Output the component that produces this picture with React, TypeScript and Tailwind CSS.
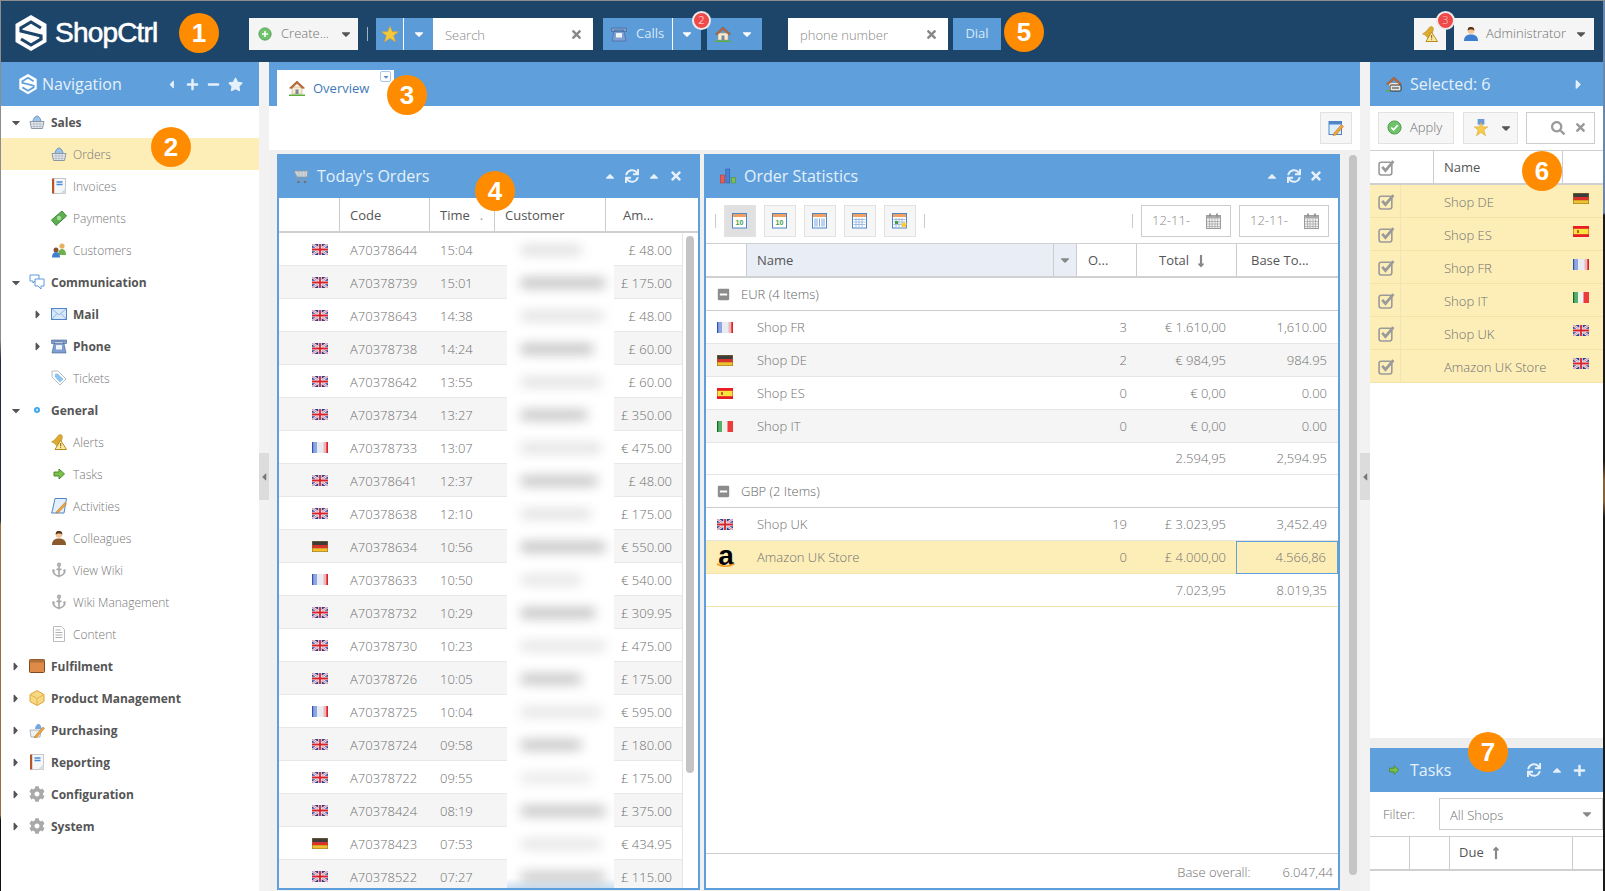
import React from 'react'
import {
  FaCaretDown, FaCaretLeft, FaCaretRight, FaCaretUp, FaCog, FaLongArrowAltDown, FaLongArrowAltUp,
  FaMinus, FaMinusSquare, FaPlus, FaSearch, FaStar, FaSync, FaTimes,
} from 'react-icons/fa'
import { Anchor } from 'lucide-react'

type Svg = { className?: string }

const Logo = ({ stroke, className }: { stroke: string; className: string }) => (
  <svg viewBox="0 0 32 36" className={className}>
    <path d="M16 0 31.5 9v18L16 36 .5 27V9z" fill="#fff" />
    <path d="M26 13 16 7 6 13v3l20 5v3l-10 6-10-6" fill="none" stroke={stroke} strokeWidth="3.2" />
  </svg>
)

const UkFlag = () => (
  <svg viewBox="0 0 16 11" className="h-[11px] w-4 shrink-0">
    <rect width="16" height="11" fill="#2b3f95" />
    <path d="M0 0 16 11M16 0 0 11" stroke="#e6e8f2" strokeWidth="2.6" />
    <path d="M0 0 16 11M16 0 0 11" stroke="#e0555a" strokeWidth=".7" />
    <path d="M8 0v11M0 5.500h16" stroke="#f2f2f6" strokeWidth="3.400" />
    <path d="M8 0v11M0 5.500h16" stroke="#d8232a" strokeWidth="1.800" />
  </svg>
)
const Flag = ({ c }: { c: string }) => (
  <svg viewBox="0 0 16 11" className="h-[11px] w-4 shrink-0">
    {c === 'fr' && (
      <>
        <rect width="16" height="11" fill="#e8ebf2" />
        <rect x="1" width="4" height="11" fill="#8ea6e4" />
        <rect x="11.500" width="3" height="11" fill="#eeb8b8" />
        <rect width="1.200" height="11" fill="#2f52b4" />
        <rect x="14.300" width="1.700" height="11" fill="#e01f26" />
      </>
    )}
    {c === 'it' && (
      <>
        <rect width="16" height="11" fill="#f0f2ee" />
        <rect width="5" height="11" fill="#58b068" />
        <rect width="1.200" height="11" fill="#14662a" />
        <rect x="10.500" width="5.500" height="11" fill="#ee3a3a" />
      </>
    )}
    {c === 'de' && (
      <>
        <rect width="16" height="11" fill="#8a7020" />
        <rect x=".5" y=".5" width="15" height="3.500" fill="#3c3c3c" />
        <rect x=".5" y="4" width="15" height="3.300" fill="#d8322a" />
        <rect x=".5" y="7.300" width="15" height="3.200" fill="#f0c030" />
      </>
    )}
    {c === 'es' && (
      <>
        <rect width="16" height="11" fill="#e81c24" />
        <rect x=".5" y="2.800" width="15" height="5.400" fill="#f7e43c" />
        <rect x="4" y="4" width="2" height="3" fill="#c85a30" />
      </>
    )}
    {c === 'uk' && <UkFlag />}
  </svg>
)

const Check = ({ className }: Svg) => (
  <svg viewBox="0 0 16 16" className={className}>
    <rect x="1" y="3" width="12" height="12" rx="2" fill="none" stroke="#9a9a9a" strokeWidth="1.500" />
    <path d="m4 7.500 3 3.500 7.500-9" fill="none" stroke="#9a9a9a" strokeWidth="2.600" />
  </svg>
)

const Basket = ({ className }: Svg) => (
  <svg viewBox="0 0 16 16" className={className}>
    <path d="M4 8C4 4 7 2 8 2s4 2 4 6" fill="#9cc3ea" stroke="#5f8fc0" />
    <path d="M1 7.500h14l-1.500 7h-11z" fill="#e9edf2" stroke="#8d98a4" />
    <path d="M1.500 10h13M2 12.500h12M5 8v6M8 8v6M11 8v6" stroke="#a9b2bc" strokeWidth=".7" />
  </svg>
)
const Notebook = ({ className }: Svg) => (
  <svg viewBox="0 0 16 16" className={className}>
    <rect x="2.500" y="0.500" width="12" height="15" fill="#f4f6f8" stroke="#c4c8cc" />
    <rect x="1" y="0.500" width="2.200" height="15" fill="#b8542a" />
    <path d="M5.500 4h6M5.500 6.500h6" stroke="#4a8ad8" strokeWidth="1.400" />
    <path d="M14.500 10v5.500H9z" fill="#d9dde2" />
  </svg>
)
const Money = ({ className }: Svg) => (
  <svg viewBox="0 0 16 16" className={className}>
    <path d="M0.500 10 11 1l4.500 5L5 15.500z" fill="#5dae52" stroke="#3e8a38" />
    <circle cx="8" cy="8" r="2.200" fill="#a6dc94" />
  </svg>
)
const People = ({ className }: Svg) => (
  <svg viewBox="0 0 16 16" className={className}>
    <circle cx="11" cy="4" r="2.600" fill="#e8b060" />
    <path d="M7 13c0-4 2-6 4-6s4 2 4 6z" fill="#6eb04e" />
    <circle cx="5" cy="8" r="2.500" fill="#8a5030" />
    <path d="M1 15.500c0-4 2-5.500 4-5.500s4 1.500 4 5.500z" fill="#3f7fd0" />
  </svg>
)
const Chat = ({ className }: Svg) => (
  <svg viewBox="0 0 16 16" className={className}>
    <path d="M1 1h9v6H6l-2 2V7H1z" fill="#fff" stroke="#5f9ad8" />
    <path d="M6 5h9v7h-3v3l-3-3H6z" fill="#fff" stroke="#5f9ad8" />
  </svg>
)
const Mail = ({ className }: Svg) => (
  <svg viewBox="0 0 16 16" className={className}>
    <rect x=".5" y="2.500" width="15" height="11" fill="#d8e8f8" stroke="#4f86c8" />
    <path d="m1 3 7 6 7-6M1 13l5-5.500M15 13l-5-5.500" fill="none" stroke="#8fb6e2" />
  </svg>
)
const Phone = ({ className }: Svg) => (
  <svg viewBox="0 0 16 16" className={className}>
    <path d="M.5 2h15v3.500h-3V4h-9v1.500h-3z" fill="#7f9fcc" stroke="#3f5f94" strokeWidth=".6" />
    <path d="M3 5.500h10L15 15H1z" fill="#7f9fd0" stroke="#3f5f94" strokeWidth=".6" />
    <rect x="5" y="7" width="6" height="4.500" fill="#eef3fa" />
  </svg>
)
const Tag = ({ className }: Svg) => (
  <svg viewBox="0 0 16 16" className={className}>
    <path d="M1 1h6l8 8-6 6-8-8z" fill="#fff" stroke="#b8bcc2" />
    <path d="M4.500 3.500h2l6 5.500-3.500 3.500-5.500-6z" fill="#8ec2f0" />
  </svg>
)
const Dot = ({ className }: Svg) => (
  <svg viewBox="0 0 16 16" className={className}>
    <circle cx="8" cy="8" r="3" fill="#3fa4ee" />
    <circle cx="8" cy="8" r="1.200" fill="#bfe2fb" />
  </svg>
)
const Bell = ({ className }: Svg) => (
  <svg viewBox="0 0 16 16" className={className}>
    <path d="M0.500 8C3 6 5 5 6 3c1-2 4-3.500 5-1.500 1 2 0 3-.5 5L6 12 3 9z" fill="#dcaa30" stroke="#b88a20" strokeWidth=".5" />
    <path d="M9.500 6 15.500 15.500H4z" fill="#fbe9a0" stroke="#b88a20" />
    <path d="M9.700 9v3.300M9.700 13.200v1" stroke="#7a5a10" />
  </svg>
)
const Arrow = ({ className }: Svg) => (
  <svg viewBox="0 0 16 16" className={className}>
    <path d="M3 6h5V3l5.500 5L8 13v-3H3z" fill="#7cc04a" stroke="#4b8a28" />
  </svg>
)
const ScrollPen = ({ className }: Svg) => (
  <svg viewBox="0 0 16 16" className={className}>
    <path d="M4 .5h11.500L13 15H.500l1-3z" fill="#e3effb" stroke="#4f86c8" />
    <path d="M6 13 14 4.500l1.500 1.500-8 8.500-2.500.500z" fill="#f0a63a" stroke="#b06a18" strokeWidth=".5" />
  </svg>
)
const Person = ({ className, body = '#8a5a2a' }: Svg & { body?: string }) => (
  <svg viewBox="0 0 16 16" className={className}>
    <circle cx="8" cy="4.500" r="3.300" fill="#f1c595" />
    <path d="M4.700 4.500C4.700 1.500 6 1 8 1s3.300.5 3.300 3.500C10 3 6 3 4.700 4.500" fill="#5a3418" />
    <path d="M1 15c0-4 2-6.500 7-6.500s7 2.500 7 6.500z" fill={body} />
  </svg>
)
const Doc = ({ className }: Svg) => (
  <svg viewBox="0 0 16 16" className={className}>
    <path d="M2.500.5h8l3 3v12h-11z" fill="#fff" stroke="#bcbcbc" />
    <path d="M4.500 4h5M4.500 6.500h7M4.500 9h7M4.500 11.500h7" stroke="#b0b0b0" />
  </svg>
)
const Box = ({ className }: Svg) => (
  <svg viewBox="0 0 16 16" className={className}>
    <rect x=".5" y="1.500" width="15" height="13" rx="1" fill="#e08a48" stroke="#7a4a20" />
    <rect x=".5" y="1.500" width="15" height="3" fill="#b07038" />
  </svg>
)
const Cube = ({ className }: Svg) => (
  <svg viewBox="0 0 16 16" className={className}>
    <path d="M8 .5 15 4.500v7L8 15.500 1 11.500v-7z" fill="#f8d882" stroke="#d8a438" />
    <path d="M1 4.500 8 8.500l7-4M8 8.500v7" fill="none" stroke="#e2b44c" />
  </svg>
)
const BasketPen = ({ className }: Svg) => (
  <svg viewBox="0 0 16 16" className={className}>
    <path d="M6 7c0-3 2-5 3.500-5s3 2 3 5" fill="#74a8e0" />
    <path d="M1 8h11l-1 7H2z" fill="#eef1f4" stroke="#8d98a4" strokeWidth=".7" />
    <path d="M6 14 14 5l1.500 1.500-8 9-2.500.500z" fill="#f0a63a" stroke="#b06a18" strokeWidth=".5" />
  </svg>
)
const Gear = ({ className }: Svg) => <FaCog className={`text-[#a9a9a9] ${className}`} />
const Anc = ({ className }: Svg) => <Anchor strokeWidth={2.4} className={`text-[#a8a8a8] ${className}`} />

const Home = ({ className }: Svg) => (
  <svg viewBox="0 0 16 16" className={className}>
    <path d="M3 7h10v7H3z" fill="#f6ead0" stroke="#b89a6a" strokeWidth=".5" />
    <path d="M8 1 15.500 8 13.500 8.500 8 3.500 2.500 8.500.500 8z" fill="#c06a38" stroke="#8a4a20" strokeWidth=".5" />
    <rect x="6.500" y="9.500" width="3" height="4.500" fill="#7a8a9a" />
    <path d="M0 14.500h16V16H0z" fill="#5cae3c" />
  </svg>
)
const HomeCfg = ({ className }: Svg) => (
  <svg viewBox="0 0 16 16" className={className}>
    <path d="M3 7h10v7H3z" fill="#f6ead0" />
    <path d="M8 1 15.500 8 13.500 8.500 8 3.500 2.500 8.500.500 8z" fill="#c06a38" stroke="#8a4a20" strokeWidth=".5" />
    <rect x="4" y="9" width="11" height="6" rx="1" fill="#e8e8e8" stroke="#333" />
    <path d="M0 14h4v1.500H0z" fill="#5cae3c" />
    <path d="M6 12h7" stroke="#333" />
  </svg>
)
const Cart = ({ className }: Svg) => (
  <svg viewBox="0 0 16 16" className={className}>
    <path d="M1 3h14l-1 6H4z" fill="#dde3ea" stroke="#8e98a2" />
    <path d="M3 5h11M3.500 7h10M6 3v6M9 3v6M12 3v6" stroke="#a5aeb8" strokeWidth=".6" />
    <path d="M4 9v3h9" fill="none" stroke="#8e98a2" />
    <circle cx="5.500" cy="14" r="1.300" fill="#6a7480" />
    <circle cx="12" cy="14" r="1.300" fill="#6a7480" />
  </svg>
)
const Chart = ({ className }: Svg) => (
  <svg viewBox="0 0 16 16" className={className}>
    <rect x="0.500" y="7" width="4" height="8" fill="#ee5a50" stroke="#b03028" strokeWidth=".5" />
    <rect x="5.800" y="1" width="4" height="14" fill="#4a7fd8" stroke="#2a52a0" strokeWidth=".5" />
    <rect x="11.200" y="9.500" width="4" height="5.500" fill="#7cc04a" stroke="#4b8a28" strokeWidth=".5" />
  </svg>
)
const Medal = ({ className }: Svg) => (
  <svg viewBox="0 0 16 16" className={className}>
    <path d="M5 0h6v5H5z" fill="#6a9ad8" />
    <path d="m8 3 1.600 4h4.400l-3.500 2.800 1.500 5L8 12l-4 2.800 1.500-5L2 7h4.400z" fill="#f6cc4a" stroke="#d8a030" strokeWidth=".5" />
  </svg>
)
const Star = ({ className }: Svg) => (
  <svg viewBox="0 0 16 16" className={className}>
    <path d="m8 1 2 5h5.500l-4.300 3.400 1.700 5.600L8 11.800 3.100 15l1.700-5.600L.5 6H6z" fill="#f6c93c" stroke="#d8a030" strokeWidth=".5" />
  </svg>
)
const PlusCircle = ({ className }: Svg) => (
  <svg viewBox="0 0 16 16" className={className}>
    <circle cx="8" cy="8" r="7" fill="#6fc36a" stroke="#4a9a48" />
    <path d="M8 4.500v7M4.500 8h7" stroke="#fff" strokeWidth="1.800" />
  </svg>
)
const CheckCircle = ({ className }: Svg) => (
  <svg viewBox="0 0 16 16" className={className}>
    <circle cx="8" cy="8" r="7" fill="#6fc36a" stroke="#4a9a48" />
    <path d="m4.500 8 2.500 2.500 4.500-5" fill="none" stroke="#fff" strokeWidth="1.800" />
  </svg>
)
const PagePen = ({ className }: Svg) => (
  <svg viewBox="0 0 16 16" className={className}>
    <rect x="1" y="1.500" width="12.500" height="13" fill="#dfeefb" stroke="#4f86c8" />
    <rect x="1" y="1.500" width="12.500" height="3" fill="#4f86c8" />
    <path d="M6 13 13.500 4.500 15.500 6.500 8 15l-3 .5z" fill="#f0a63a" stroke="#b06a18" strokeWidth=".5" />
  </svg>
)
const Calendar = () => (
  <svg viewBox="0 0 15 16" className="h-4 w-[15px]">
    <rect x=".5" y="2.500" width="14" height="13" fill="#f2f2f2" stroke="#999" />
    <rect x=".5" y="2.500" width="14" height="3" fill="#aaa" />
    <path d="M4 .5v3M11 .5v3" stroke="#888" strokeWidth="1.600" />
    <path d="M.5 8.500h14M.5 11h14M.5 13.500h14M3.500 5.500v10M6 5.500v10M9 5.500v10M11.500 5.500v10" stroke="#aaa" strokeWidth=".8" />
  </svg>
)

const CalIcon = ({ kind }: { kind: 'ten' | 'week' | 'month' | 'fav' }) => (
  <svg viewBox="0 0 16 16" className="h-4 w-4">
    <rect x=".5" y=".5" width="14" height="14.500" fill="#fff" stroke="#4f86c8" />
    <rect x="1" y="1" width="13" height="3" fill="#f0a060" />
    {kind === 'ten' && (
      <text x="7.500" y="12" fontSize="7" fontWeight="700" textAnchor="middle" fill="#4a9a48" fontFamily="Liberation Sans">10</text>
    )}
    {kind === 'week' && <path d="M3 5.500v8M5 5.500v8M7.500 5.500v8M10 5.500v8M12 5.500v8" stroke="#7aa4d8" />}
    {kind !== 'ten' && kind !== 'week' && (
      <path d="M1.500 6.500h12M1.500 9h12M1.500 11.500h12M4 5v9M7 5v9M10 5v9" stroke="#8fb0dc" strokeWidth=".8" />
    )}
    {kind === 'fav' && (
      <>
        <rect x="3" y="8" width="3" height="3" fill="#4a9a48" />
        <path d="m12 8 1.200 2.500H16l-2.200 1.800.8 3L12 13.500 9.400 15.300l.8-3L8 10.500h2.800z" fill="#f6c93c" />
      </>
    )}
  </svg>
)

type NavItem = { label: string; Icon: React.FC<Svg>; child?: boolean; bold?: boolean; caret?: 'down' | 'right'; active?: boolean }

const nav: NavItem[] = [
  { label: 'Sales', Icon: Basket, bold: true, caret: 'down' },
  { label: 'Orders', Icon: Basket, child: true, active: true },
  { label: 'Invoices', Icon: Notebook, child: true },
  { label: 'Payments', Icon: Money, child: true },
  { label: 'Customers', Icon: People, child: true },
  { label: 'Communication', Icon: Chat, bold: true, caret: 'down' },
  { label: 'Mail', Icon: Mail, child: true, bold: true, caret: 'right' },
  { label: 'Phone', Icon: Phone, child: true, bold: true, caret: 'right' },
  { label: 'Tickets', Icon: Tag, child: true },
  { label: 'General', Icon: Dot, bold: true, caret: 'down' },
  { label: 'Alerts', Icon: Bell, child: true },
  { label: 'Tasks', Icon: Arrow, child: true },
  { label: 'Activities', Icon: ScrollPen, child: true },
  { label: 'Colleagues', Icon: Person, child: true },
  { label: 'View Wiki', Icon: Anc, child: true },
  { label: 'Wiki Management', Icon: Anc, child: true },
  { label: 'Content', Icon: Doc, child: true },
  { label: 'Fulfilment', Icon: Box, bold: true, caret: 'right' },
  { label: 'Product Management', Icon: Cube, bold: true, caret: 'right' },
  { label: 'Purchasing', Icon: BasketPen, bold: true, caret: 'right' },
  { label: 'Reporting', Icon: Notebook, bold: true, caret: 'right' },
  { label: 'Configuration', Icon: Gear, bold: true, caret: 'right' },
  { label: 'System', Icon: Gear, bold: true, caret: 'right' },
]

const NavRow = ({ item }: { item: NavItem }) => {
  const { Icon } = item
  return (
    <div className={`flex h-8 items-center ${item.active ? 'bg-[#fdeeb8]' : ''} ${item.child ? 'pl-[31px]' : 'pl-[9px]'}`}>
      <span className="flex w-3 justify-center text-[#555]">
        {item.caret === 'down' && <FaCaretDown className="text-[13px]" />}
        {item.caret === 'right' && <FaCaretRight className="text-[13px]" />}
      </span>
      <Icon className="ml-[7px] h-4 w-4 shrink-0" />
      <span className={`ml-[6px] pt-px text-xs ${item.bold ? 'font-bold text-[#555]' : 'font-light text-[#777]'}`}>{item.label}</span>
    </div>
  )
}

const orders: [string, string, string, string, number, number][] = [
  ['uk', 'A70378644', '15:04', '£ 48.00', 60, 0.22],
  ['uk', 'A70378739', '15:01', '£ 175.00', 84, 0.42],
  ['uk', 'A70378643', '14:38', '£ 48.00', 82, 0.2],
  ['uk', 'A70378738', '14:24', '£ 60.00', 72, 0.42],
  ['uk', 'A70378642', '13:55', '£ 60.00', 80, 0.2],
  ['uk', 'A70378734', '13:27', '£ 350.00', 66, 0.4],
  ['fr', 'A70378733', '13:07', '€ 475.00', 80, 0.2],
  ['uk', 'A70378641', '12:37', '£ 48.00', 76, 0.4],
  ['uk', 'A70378638', '12:10', '£ 175.00', 70, 0.2],
  ['de', 'A70378634', '10:56', '€ 550.00', 84, 0.42],
  ['fr', 'A70378633', '10:50', '€ 540.00', 60, 0.18],
  ['uk', 'A70378732', '10:29', '£ 309.95', 74, 0.42],
  ['uk', 'A70378730', '10:23', '£ 475.00', 84, 0.18],
  ['uk', 'A70378726', '10:05', '£ 175.00', 60, 0.4],
  ['fr', 'A70378725', '10:04', '€ 595.00', 80, 0.18],
  ['uk', 'A70378724', '09:58', '£ 180.00', 60, 0.4],
  ['uk', 'A70378722', '09:55', '£ 175.00', 70, 0.15],
  ['uk', 'A70378424', '08:19', '£ 375.00', 84, 0.4],
  ['de', 'A70378423', '07:53', '€ 434.95', 80, 0.18],
  ['uk', 'A70378522', '07:27', '£ 115.00', 84, 0.38],
]

const PanelHeader = ({ title, Icon, tools }: { title: string; Icon: React.FC<Svg>; tools: React.ReactNode }) => (
  <div className="flex h-11 shrink-0 items-center bg-[#5fa0dc] pl-[14px] pr-[15px] text-[#e6f0fa]">
    <Icon className="h-4 w-4" />
    <span className="ml-[8px] text-base">{title}</span>
    <div className="ml-auto flex items-center gap-[8px]">{tools}</div>
  </div>
)

const TodaysOrders = () => (
  <div className="flex w-[423px] shrink-0 flex-col overflow-hidden border-x-2 border-b-2 border-[#5fa0dc] bg-white">
    <PanelHeader
      title="Today's Orders"
      Icon={Cart}
      tools={
        <>
          <FaCaretUp className="text-[14px]" />
          <FaSync className="text-[14px]" />
          <FaCaretUp className="text-[14px]" />
          <FaTimes className="text-[14px]" />
        </>
      }
    />
    <div className="flex h-[35px] shrink-0 border-b-2 border-[#d0d0d0] text-[13px] text-[#555]">
      <div className="w-[60px]" />
      <div className="flex w-[90px] items-center border-l border-[#ccc] pl-[10px] pt-[3px]">Code</div>
      <div className="flex w-[65px] items-center border-l border-[#ccc] pl-[10px] pt-[3px]">
        Time<span className="ml-[10px] text-[#999]">.</span>
      </div>
      <div className="flex w-[111px] items-center border-l border-[#ccc] pl-[10px] pt-[3px]">Customer</div>
      <div className="flex flex-1 items-center border-l border-[#ccc] pl-[17px] pt-[3px]">Am...</div>
    </div>
    <div className="flex min-h-0 flex-1">
      <div className="w-[403px] shrink-0 text-[13px] font-light text-[#707070]">
        {orders.map((o, i) => (
          <div key={o[1]} className={`flex h-[33px] ${i % 2 ? 'bg-[#f5f5f5]' : 'bg-white'}`}>
            <div className="flex w-[60px] items-center justify-end border-b border-[#e8e8e8] pr-[11px]">
              <Flag c={o[0]} />
            </div>
            <div className="flex w-[90px] items-center border-b border-[#e8e8e8] pl-[11px] pt-[4px]">{o[1]}</div>
            <div className="flex w-[78px] items-center border-b border-[#e8e8e8] pl-[11px] pt-[4px]">{o[2]}</div>
            <div className={`flex w-[107px] items-center overflow-hidden pl-[14px] ${i === 19 ? 'bg-[linear-gradient(to_bottom,#fff_55%,#b3d0ec_100%)]' : 'bg-white'}`}>
              <div className="h-[10px] bg-[#a0a0a0] blur-[6px]" style={{ width: o[4], opacity: o[5] * 1.6 }} />
            </div>
            <div className="flex flex-1 items-center justify-end border-b border-[#e8e8e8] pr-[10px] pt-[4px]">{o[3]}</div>
          </div>
        ))}
      </div>
      <div className="flex-1 border-l border-[#e5e5e5] pl-[3px] pt-[3px]">
        <div className="h-[537px] w-2 rounded-full bg-[#c4c4c4]" />
      </div>
    </div>
  </div>
)

const CalBtn = ({ kind, on }: { kind: 'ten' | 'week' | 'month' | 'fav'; on?: boolean }) => (
  <div className={`flex h-8 w-8 items-center justify-center border border-[#e2e2e2] ${on ? 'bg-[#e0e0e0]' : 'bg-[#f6f6f6]'}`}>
    <CalIcon kind={kind} />
  </div>
)

const DateBox = () => (
  <div className="flex h-8 w-[90px] items-center justify-between border border-[#ccc] pl-[10px] pr-[9px] text-[13px] font-light text-[#888]">
    12-11-
    <Calendar />
  </div>
)

const Sep = () => <div className="h-[14px] w-px bg-[#ccc]" />

const StatRow = ({ flag, name, n, total, base, grey, hl }: { flag?: React.ReactNode; name?: string; n?: string; total: string; base: string; grey?: boolean; hl?: boolean }) => (
  <div className={`flex h-[33px] items-center border-b text-[13px] font-light text-[#707070] ${hl ? 'border-[#f3e3a8] bg-[#fdeeb8]' : 'border-[#e5e5e5]'} ${grey ? 'bg-[#f5f5f5]' : ''}`}>
    <div className="flex w-[40px] justify-start pl-[11px]">{flag}</div>
    <div className="w-[330px] pl-[11px] pt-px">{name}</div>
    <div className="w-[60px] pr-[9px] pt-px text-right">{n}</div>
    <div className="w-[100px] pr-[10px] pt-px text-right">{total}</div>
    <div className={`flex h-[33px] flex-1 items-center justify-end pr-[11px] pt-px ${hl ? 'border border-[#5fa0dc]' : ''}`}>{base}</div>
  </div>
)

const Group = ({ label }: { label: string }) => (
  <div className="flex h-[33px] items-center border-b border-[#ccc] pl-[11px] text-[13px] font-light text-[#666]">
    <FaMinusSquare className="text-[13px] text-[#8c8c8c]" />
    <span className="ml-[11px] pt-px">{label}</span>
  </div>
)

const Amazon = () => (
  <span className="relative -ml-px flex h-[22px] w-[20px] flex-col items-center font-['Liberation_Sans',sans-serif] text-[28px] font-bold leading-[19px] text-black">
    a
    <svg viewBox="0 0 20 5" className="absolute bottom-0 left-0 h-[5px] w-5">
      <path d="M1 1c5 3 12 3 17 0" fill="none" stroke="#f09a20" strokeWidth="1.500" />
    </svg>
  </span>
)

const OrderStats = () => (
  <div className="flex w-[636px] shrink-0 flex-col border-x-2 border-b-2 border-[#5fa0dc] bg-white">
    <PanelHeader
      title="Order Statistics"
      Icon={Chart}
      tools={
        <>
          <FaCaretUp className="text-[14px]" />
          <FaSync className="text-[14px]" />
          <FaTimes className="text-[14px]" />
        </>
      }
    />
    <div className="flex h-[45px] shrink-0 items-center pl-[9px] pr-[9px] pt-px">
      <Sep />
      <div className="ml-[8px] flex gap-2">
        <CalBtn kind="ten" on />
        <CalBtn kind="ten" />
        <CalBtn kind="week" />
        <CalBtn kind="month" />
        <CalBtn kind="fav" />
      </div>
      <div className="ml-[8px]"><Sep /></div>
      <div className="ml-auto"><Sep /></div>
      <div className="ml-[8px]"><DateBox /></div>
      <div className="ml-[8px]"><DateBox /></div>
    </div>
    <div className="flex h-[35px] shrink-0 border-y border-b-2 border-y-[#d0d0d0] text-[13px] text-[#555]">
      <div className="w-[40px]" />
      <div className="flex w-[307px] items-center border-l border-[#ccc] bg-[#e9edf5] pl-[10px] pt-px">Name</div>
      <div className="flex w-[23px] items-center justify-center border-l border-[#ccc] bg-[#e9edf5] text-[#888]">
        <FaCaretDown className="text-[14px]" />
      </div>
      <div className="flex w-[60px] items-center border-l border-[#ccc] pl-[11px] pt-px">O...</div>
      <div className="flex w-[100px] items-center border-l border-[#ccc] pl-[22px] pt-px">
        Total<FaLongArrowAltDown className="ml-[5px] text-[14px] text-[#888]" />
      </div>
      <div className="flex flex-1 items-center border-l border-[#ccc] pl-[14px] pt-px">Base To...</div>
    </div>
    <Group label="EUR (4 Items)" />
    <StatRow flag={<Flag c="fr" />} name="Shop FR" n="3" total="€ 1.610,00" base="1,610.00" />
    <StatRow flag={<Flag c="de" />} name="Shop DE" n="2" total="€ 984,95" base="984.95" grey />
    <StatRow flag={<Flag c="es" />} name="Shop ES" n="0" total="€ 0,00" base="0.00" />
    <StatRow flag={<Flag c="it" />} name="Shop IT" n="0" total="€ 0,00" base="0.00" grey />
    <div className="flex h-[32px] items-center border-b border-[#e5e5e5] text-[13px] font-light text-[#707070]">
      <div className="w-[530px] pr-[10px] pt-px text-right">2.594,95</div>
      <div className="flex-1 pr-[11px] pt-px text-right">2,594.95</div>
    </div>
    <Group label="GBP (2 Items)" />
    <StatRow flag={<Flag c="uk" />} name="Shop UK" n="19" total="£ 3.023,95" base="3,452.49" />
    <StatRow flag={<Amazon />} name="Amazon UK Store" n="0" total="£ 4.000,00" base="4.566,86" hl />
    <div className="flex h-[33px] items-center border-b border-[#f3e3a8] text-[13px] font-light text-[#707070]">
      <div className="w-[530px] pr-[10px] pt-px text-right">7.023,95</div>
      <div className="flex-1 pr-[11px] pt-px text-right">8.019,35</div>
    </div>
    <div className="mt-auto flex h-[35px] items-center justify-end gap-[32px] border-t border-[#ccc] pr-[5px] pt-[3px] text-[13px] font-light text-[#707070]">
      <span>Base overall:</span>
      <span>6.047,44</span>
    </div>
  </div>
)

const selected: [string, string][] = [
  ['Shop DE', 'de'], ['Shop ES', 'es'], ['Shop FR', 'fr'], ['Shop IT', 'it'], ['Shop UK', 'uk'], ['Amazon UK Store', 'uk'],
]

const RightPanel = () => (
  <div className="flex w-[233px] shrink-0 flex-col bg-white">
    <div className="flex h-11 shrink-0 items-center bg-[#5fa0dc] pl-[16px] pr-[17px] text-[#e6f0fa]">
      <HomeCfg className="h-4 w-4" />
      <span className="ml-[8px] text-base">Selected: 6</span>
      <FaCaretRight className="ml-auto text-[15px]" />
    </div>
    <div className="flex h-11 shrink-0 items-center pb-[1px] pl-[8px] text-[13px] font-light text-[#707070]">
      <div className="flex h-8 w-[76px] items-center border border-[#e2e2e2] bg-[#f6f6f6] pl-[8px]">
        <CheckCircle className="h-[15px] w-[15px]" />
        <span className="ml-[8px] pt-px">Apply</span>
      </div>
      <div className="ml-[9px] flex h-8 w-[55px] items-center border border-[#e2e2e2] bg-[#f6f6f6] pl-[8px]">
        <Medal className="h-[18px] w-[18px]" />
        <FaCaretDown className="ml-[9px] text-[14px] text-[#555]" />
      </div>
      <div className="ml-[8px] flex h-8 w-[69px] items-center justify-end gap-[9px] border border-[#ccc] pr-[7px] text-[#999]">
        <FaSearch className="text-[14px]" />
        <FaTimes className="text-[13px]" />
      </div>
    </div>
    <div className="flex h-[35px] shrink-0 border-b-2 border-t border-b-[#d0d0d0] border-t-[#d0d0d0] text-[13px] text-[#555]">
      <div className="flex w-[63px] items-center pl-[8px]">
        <Check className="h-[17px] w-[17px]" />
      </div>
      <div className="flex w-[129px] items-center border-l border-[#ccc] pl-[10px] pt-px">Name</div>
      <div className="flex-1 border-l border-[#ccc]" />
    </div>
    {selected.map(([name, flag]) => (
      <div key={name} className="flex h-[33px] shrink-0 border-b border-[#f3e3a8] bg-[#fdeeb8] text-[13px] font-light text-[#707070]">
        <div className="flex w-[31px] items-center border-r border-[#f0e4b8] pl-[8px]">
          <Check className="h-[17px] w-[17px]" />
        </div>
        <div className="flex flex-1 items-center pl-[43px] pt-[3px]">{name}</div>
        <div className="w-[30px] pt-[8px]"><Flag c={flag} /></div>
      </div>
    ))}
    <div className="mt-auto h-[10px] shrink-0 bg-[#eeeeee]" />
    <div className="flex h-11 shrink-0 items-center bg-[#5fa0dc] pl-[17px] pr-[17px] text-[#e6f0fa]">
      <Arrow className="h-[14px] w-[14px]" />
      <span className="ml-[9px] text-base">Tasks</span>
      <div className="ml-auto flex items-center gap-[9px]">
        <FaSync className="text-[14px]" />
        <FaCaretUp className="text-[14px]" />
        <FaPlus className="text-[13px]" />
      </div>
    </div>
    <div className="flex h-11 shrink-0 items-center pl-[13px] text-[13px] font-light text-[#707070]">
      <span className="pt-[2px]">Filter:</span>
      <div className="ml-[24px] flex h-8 flex-1 items-center justify-between border border-[#ccc] pl-[10px] pr-[8px]">
        <span className="pt-[4px]">All Shops</span>
        <FaCaretDown className="text-[14px] text-[#888]" />
      </div>
    </div>
    <div className="flex h-[35px] shrink-0 border-b-2 border-t border-b-[#d0d0d0] border-t-[#d0d0d0] text-[13px] text-[#555]">
      <div className="w-[39px]" />
      <div className="w-[40px] border-l border-[#ccc]" />
      <div className="flex w-[123px] items-center border-l border-[#ccc] pl-[9px]">
        Due<FaLongArrowAltUp className="ml-[5px] text-[14px] text-[#888]" />
      </div>
      <div className="flex-1 border-l border-[#ccc]" />
    </div>
    <div className="h-5 shrink-0" />
  </div>
)

const Gutter = () => (
  <div className="flex w-[10px] shrink-0 items-center bg-[#f2f2f2]">
    <div className="flex h-[47px] w-full items-center justify-center bg-[#dcdcdc] text-[#777]">
      <FaCaretLeft className="text-[12px]" />
    </div>
  </div>
)

const Alert = ({ n, className }: { n: string; className: string }) => (
  <span className={`absolute flex h-[19px] w-[19px] items-center justify-center rounded-full border-2 border-[#f0eaea] bg-[#ee4a4a] text-[11px] text-[#ffc4c4] ${className}`}>
    {n}
  </span>
)

const marks: [string, string][] = [
  ['1', 'left-[179px] top-[13px]'],
  ['2', 'left-[151px] top-[127px]'],
  ['3', 'left-[387px] top-[75px]'],
  ['4', 'left-[475px] top-[171px]'],
  ['5', 'left-[1004px] top-[12px]'],
  ['6', 'left-[1522px] top-[151px]'],
  ['7', 'left-[1468px] top-[732px]'],
]

export default function App() {
  return (
    <div className="relative flex h-[891px] w-[1605px] overflow-hidden bg-[linear-gradient(to_bottom,#8d8d8d_0,#8d8d8d_340px,#232a3c_360px,#232a3c_520px,#9a6e3e_525px,#9a6e3e_815px,#111_820px)] pl-px pt-px font-['Open_Sans',sans-serif]">
      <div className="flex h-[890px] w-[1602px] shrink-0 flex-col">
        {/* top bar */}
        <div className="flex h-[61px] shrink-0 items-center bg-[#1d4469] pt-[5px] text-[13px] font-light">
          <div className="flex w-[248px] items-center self-start pl-[14px] pt-[6px]">
            <Logo stroke="#1d4469" className="h-9 w-8" />
            <span className="ml-[8px] font-['Liberation_Sans',sans-serif] text-[28px] font-normal tracking-[-0.8px] text-white [-webkit-text-stroke:0.6px_white]">ShopCtrl</span>
          </div>
          <div className="flex h-8 w-[109px] items-center bg-[#f5f5f5] pl-[9px] text-[#707070]">
            <PlusCircle className="h-[14px] w-[14px]" />
            <span className="ml-[9px]">Create...</span>
            <FaCaretDown className="ml-[10px] text-[14px] text-[#555]" />
          </div>
          <div className="ml-[9px] h-[14px] w-px bg-[#9fb3c6]" />
          <div className="ml-[8px] flex h-8 bg-[#5a9bd8]">
            <div className="flex w-[28px] items-center justify-center border-r border-white"><Star className="h-[18px] w-[18px]" /></div>
            <div className="flex w-[29px] items-center justify-center text-white"><FaCaretDown className="text-[14px]" /></div>
          </div>
          <div className="flex h-8 w-[160px] items-center justify-between bg-white pl-[12px] pr-[10px] text-[#888]">
            <span className="pt-[4px]">Search</span>
            <FaTimes className="text-[13px] text-[#888]" />
          </div>
          <div className="relative ml-[10px] flex h-8 bg-[#5a9bd8] font-normal text-[#dce9f6]">
            <div className="flex w-[70px] items-center border-r border-white pl-[8px]">
              <Phone className="h-4 w-4" />
              <span className="ml-[9px]">Calls</span>
            </div>
            <div className="flex w-[28px] items-center justify-center text-white"><FaCaretDown className="text-[14px]" /></div>
            <Alert n="2" className="-right-[10px] -top-[7px]" />
          </div>
          <div className="ml-[6px] flex h-8 w-[55px] items-center justify-center gap-[9px] bg-[#5a9bd8] text-white">
            <Home className="h-4 w-4" />
            <FaCaretDown className="text-[14px]" />
          </div>
          <div className="ml-[26px] flex h-8 w-[160px] items-center justify-between bg-white pl-[12px] pr-[10px] text-[#888]">
            <span className="pt-[4px]">phone number</span>
            <FaTimes className="text-[13px] text-[#888]" />
          </div>
          <div className="ml-[5px] flex h-8 w-[48px] items-center justify-center bg-[#5a9bd8] font-normal text-[#dce9f6]">Dial</div>
          <div className="relative ml-auto flex h-8 w-[32px] items-center justify-center bg-[#f5f5f5]">
            <Bell className="h-4 w-4" />
            <Alert n="3" className="-right-[9px] -top-[7px]" />
          </div>
          <div className="ml-[8px] mr-[9px] flex h-8 w-[140px] items-center bg-[#f5f5f5] pl-[9px] text-[#707070]">
            <Person body="#3f7fd0" className="h-4 w-4" />
            <span className="ml-[7px]">Administrator</span>
            <FaCaretDown className="ml-auto mr-[6px] text-[14px] text-[#555]" />
          </div>
        </div>

        <div className="flex min-h-0 flex-1">
          {/* navigation */}
          <div className="flex w-[258px] shrink-0 flex-col bg-white">
            <div className="flex h-11 shrink-0 items-center bg-[#5fa0dc] pl-[18px] pr-[16px] text-[#e6f0fa]">
              <Logo stroke="#5fa0dc" className="h-[22px] w-[18px]" />
              <span className="ml-[5px] text-base">Navigation</span>
              <div className="ml-auto flex items-center gap-[8px]">
                <FaCaretLeft className="text-[13px]" />
                <FaPlus className="text-[13px]" />
                <FaMinus className="text-[13px]" />
                <FaStar className="text-[15px]" />
              </div>
            </div>
            {nav.map(item => <NavRow key={item.label} item={item} />)}
          </div>
          <Gutter />

          {/* centre */}
          <div className="flex w-[1091px] shrink-0 flex-col bg-[#f0f0f0]">
            <div className="flex h-11 shrink-0 items-end bg-[#5fa0dc] pl-[8px]">
              <div className="relative flex h-9 w-[117px] items-center bg-white pl-[12px] text-[13px] text-[#3f7ab8]">
                <Home className="h-4 w-4" />
                <span className="ml-[8px] pt-px">Overview</span>
                <span className="absolute right-[3px] top-[1px] flex h-[11px] w-[11px] items-center justify-center rounded-[2px] border border-[#a8c8ea] text-[#5f8fc0]">
                  <FaCaretDown className="text-[8px]" />
                </span>
              </div>
            </div>
            <div className="flex h-11 shrink-0 items-center justify-end bg-white pr-[8px]">
              <div className="flex h-8 w-8 items-center justify-center border border-[#e2e2e2] bg-[#f6f6f6]">
                <PagePen className="h-4 w-4" />
              </div>
            </div>
            <div className="flex min-h-0 flex-1 gap-1 pb-px pl-[8px] pt-1">
              <TodaysOrders />
              <OrderStats />
              <div className="ml-[5px] mt-px h-[720px] w-2 rounded-full bg-[#c4c4c4]" />
            </div>
          </div>
          <Gutter />

          <RightPanel />
        </div>
      </div>
      <div className="h-full w-[2px] shrink-0 bg-[linear-gradient(to_bottom,#6a88aa_0,#6a88aa_212px,#1a1a1a_214px,#1a1a1a_460px,#8a6236_480px,#8a6236_500px,#1a1a1a_516px)]" />

      {marks.map(([n, pos]) => (
        <div key={n} className={`absolute ${pos} flex h-10 w-10 items-center justify-center rounded-full bg-[#ff8c00] font-['Liberation_Sans',sans-serif] text-[26px] font-bold text-white`}>
          {n}
        </div>
      ))}
    </div>
  )
}
